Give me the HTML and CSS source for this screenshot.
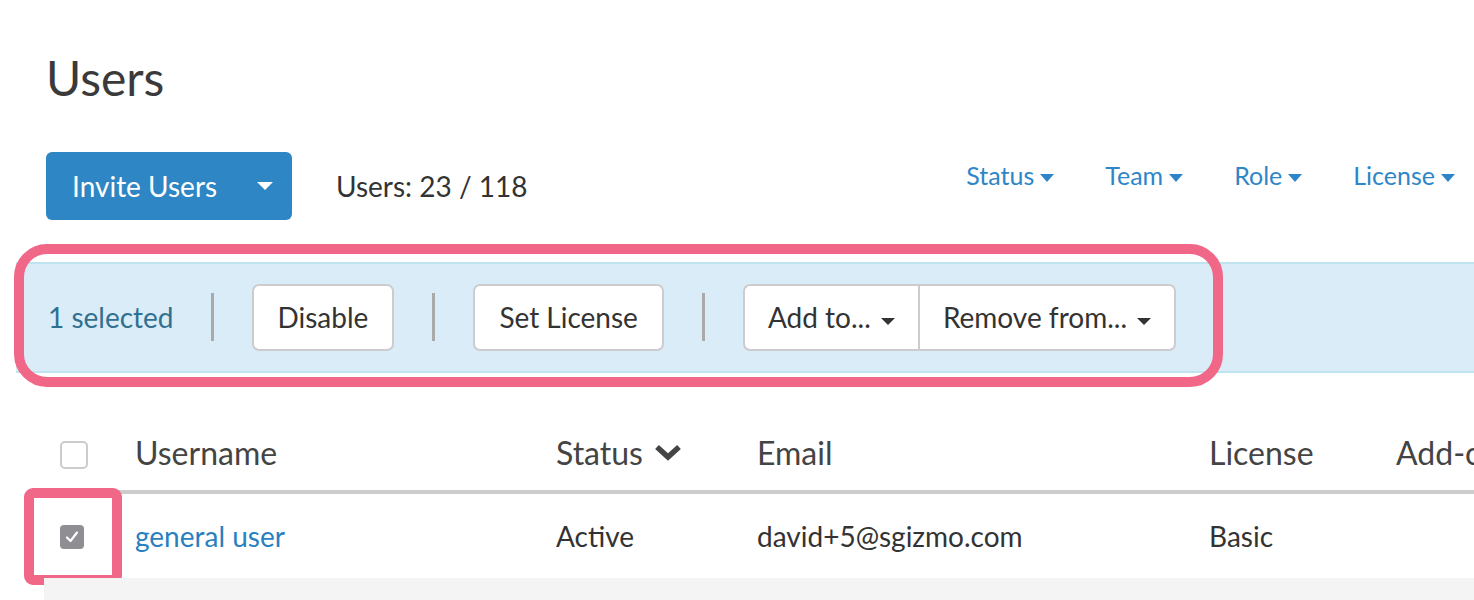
FILE: index.html
```html
<!DOCTYPE html>
<html lang="en">
<head>
  <meta charset="UTF-8">
  <title>Users</title>
  <link rel="stylesheet" href="styles.css">
</head>
<body>
  <div class="page-head">
    <h1 class="title">Users</h1>
    <div class="toolbar">
      <button class="invite-btn">Invite Users <span class="caret caret-white"></span></button>
      <div class="user-count">Users: 23 / 118</div>
      <div class="filters">
        <a class="filter">Status<span class="caret caret-blue"></span></a>
        <a class="filter">Team<span class="caret caret-blue"></span></a>
        <a class="filter">Role<span class="caret caret-blue"></span></a>
        <a class="filter">License<span class="caret caret-blue"></span></a>
      </div>
    </div>
  </div>

  <div class="bulk-wrap">
    <div class="bulk-bar">
      <span class="selected-count">1 selected</span>
      <span class="sep"></span>
      <button class="btn">Disable</button>
      <span class="sep"></span>
      <button class="btn">Set License</button>
      <span class="sep"></span>
      <div class="btn-group">
        <button class="btn">Add to... <span class="caret caret-dark"></span></button>
        <button class="btn">Remove from... <span class="caret caret-dark"></span></button>
      </div>
    </div>
    <div class="highlight highlight-bar"></div>
  </div>

  <div class="users-table">
    <div class="row head-row">
      <div class="cell"><span class="checkbox"></span></div>
      <div class="cell">Username</div>
      <div class="cell">Status
        <svg class="sort-icon" width="28" height="18" viewBox="0 0 28 18"><path d="M3 4 L14 14 L25 4" fill="none" stroke="#444" stroke-width="5.5" stroke-linejoin="miter"/></svg>
      </div>
      <div class="cell">Email</div>
      <div class="cell">License</div>
      <div class="cell">Add-ons</div>
    </div>
    <div class="row body-row">
      <div class="cell">
        <span class="checkbox checked">
          <svg width="16" height="16" viewBox="0 0 16 16"><path d="M3 8.5 L6.5 12 L13 3.5" fill="none" stroke="#fff" stroke-width="2.2" stroke-linecap="round" stroke-linejoin="round"/></svg>
        </span>
      </div>
      <div class="cell"><a class="user-link">general user</a></div>
      <div class="cell">Active</div>
      <div class="cell">david+5@sgizmo.com</div>
      <div class="cell">Basic</div>
      <div class="cell"></div>
      <div class="highlight highlight-check"></div>
    </div>
    <div class="row stripe-row"></div>
  </div>
</body>
</html>
```

FILE: styles.css
```css
* {
  box-sizing: border-box;
}
html, body {
  overflow: hidden;
}
body {
  margin: 0;
  padding: 0;
  font-family: Lato, "Open Sans", sans-serif;
  color: #333;
  background: #fff;
  height: 600px;
}
.page-head {
  padding: 52px 19px 0 46px;
}
.title {
  margin: 0;
  font-size: 48px;
  font-weight: 400;
  line-height: 1.1;
  color: #3a3a3a;
}
.toolbar {
  display: flex;
  align-items: center;
  margin-top: 47px;
}
.invite-btn {
  display: flex;
  align-items: center;
  width: 246px;
  height: 68px;
  padding: 0 19px 0 26px;
  background: #2e87c4;
  color: #fff;
  border: none;
  border-radius: 6px;
  font-family: inherit;
  font-size: 28px;
}
.invite-btn .caret {
  margin-left: auto;
}
.caret {
  display: inline-block;
  width: 0;
  height: 0;
  vertical-align: middle;
}
.caret-white {
  border-left: 8px solid transparent;
  border-right: 8px solid transparent;
  border-top: 8px solid #fff;
}
.caret-blue {
  border-left: 7.5px solid transparent;
  border-right: 7.5px solid transparent;
  border-top: 8px solid #2e86c8;
  margin-left: 6px;
}
.caret-dark {
  border-left: 7px solid transparent;
  border-right: 7px solid transparent;
  border-top: 7px solid #333;
  margin-left: 3px;
}
.user-count {
  margin-left: 44px;
  font-size: 28px;
}
.filters {
  display: flex;
  gap: 51px;
  margin-left: auto;
  align-self: flex-start;
  margin-top: 8px;
}
.filter {
  font-size: 25px;
  color: #2e86c8;
  cursor: pointer;
}
.bulk-wrap {
  position: relative;
  margin: 42px 0 0 16px;
}
.bulk-bar {
  display: flex;
  align-items: center;
  gap: 38px;
  height: 111px;
  padding-left: 32px;
  background: #d9ecf7;
  border-top: 2px solid #bfe3ef;
  border-bottom: 2px solid #bfe3ef;
}
.selected-count {
  font-size: 28px;
  color: #31708f;
  margin-right: -1px;
}
.sep {
  width: 3px;
  height: 48px;
  background: #aaa;
}
.btn {
  height: 67px;
  padding: 0 24px;
  background: #fff;
  border: 2px solid #ccc;
  border-radius: 7px;
  font-family: inherit;
  font-size: 28px;
  color: #333;
}
.btn-group {
  display: flex;
}
.btn-group .btn {
  padding: 0 23px;
}
.btn-group .btn:first-child {
  border-radius: 7px 0 0 7px;
  border-right: none;
}
.btn-group .btn:last-child {
  border-radius: 0 7px 7px 0;
}
.highlight {
  position: absolute;
  border: 10px solid #f16787;
  pointer-events: none;
}
.highlight-bar {
  top: -18px;
  left: -2px;
  width: 1209px;
  height: 143px;
  border-radius: 33px;
}
.users-table {
  margin: 45px 0 0 44px;
  width: 1500px;
}
.row {
  position: relative;
  display: grid;
  grid-template-columns: 91px 421px 201px 452px 187px 1fr;
  align-items: center;
}
.head-row {
  height: 76px;
  border-bottom: 4px solid #ccc;
  font-size: 32px;
  color: #444;
}
.head-row .cell {
  margin-top: -3px;
}
.head-row .cell:first-child {
  margin-top: 0;
}
.body-row {
  height: 84px;
  font-size: 28px;
  color: #333;
}
.stripe-row {
  height: 40px;
  background: #f4f4f4;
}
.cell {
  display: flex;
  align-items: center;
  white-space: nowrap;
}
.cell:first-child {
  padding-left: 16px;
}
.sort-icon {
  margin-left: 11px;
}
.checkbox {
  display: flex;
  align-items: center;
  justify-content: center;
  width: 28px;
  height: 28px;
  border: 2px solid #ccc;
  border-radius: 5px;
  background: #fff;
  margin-top: 2px;
}
.checkbox.checked {
  width: 24px;
  height: 24px;
  border: none;
  border-radius: 4px;
  background: #8f8e93;
}
.user-link {
  color: #2a7fc0;
  cursor: pointer;
}
.highlight-check {
  top: -6px;
  left: -20px;
  width: 98px;
  height: 97px;
  border-radius: 9px;
}
```
